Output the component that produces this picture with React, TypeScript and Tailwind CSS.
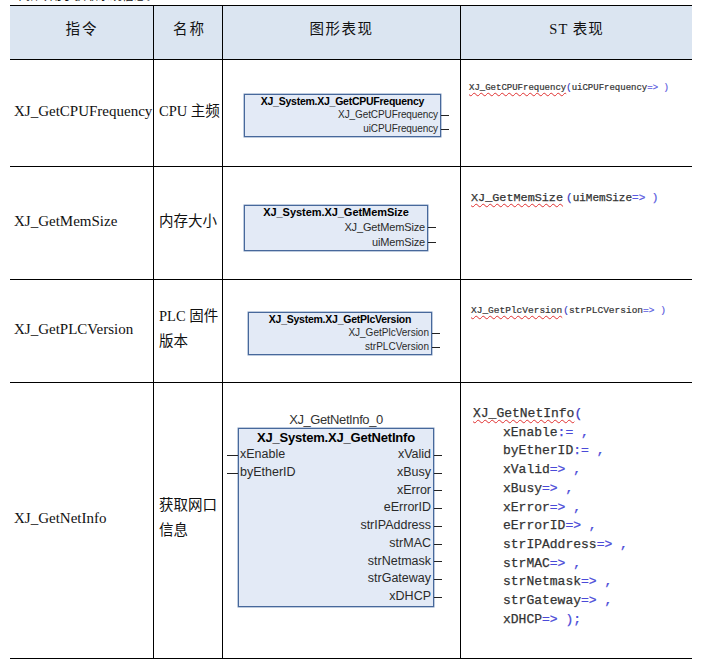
const serif = "font-['Liberation_Serif','Noto_Sans_CJK_SC',serif]";
const sans = "font-['Liberation_Sans',sans-serif]";

type BlockProps = {
  title: string;
  instance?: string;
  inputs?: string[];
  outputs: string[];
  width: string;
  height: string;
  titleSize: string;
  pinSize: string;
  rowHeight: string;
  outer: string;
};

function FbdBlock({ title, instance, inputs = [], outputs, width, height, titleSize, pinSize, rowHeight, outer }: BlockProps) {
  return (
    <div className={`flex flex-col items-center ${sans} ${width} ${outer}`}>
      {instance && <div className="mb-px h-[15px] text-[13px] leading-[15px] tracking-[-0.4px] text-[#333]">{instance}</div>}
      <div className={`w-full ${height} border border-[#47689b] bg-[#e3eaf6] text-[#2a2a2a] shadow-[0_0_0_0.5px_#7f97bd]`}>
        <div className={`text-center font-bold text-black ${titleSize}`}>{title}</div>
        <div className="flex justify-between">
          <div>
            {inputs.map((p) => (
              <div key={p} className={`relative pl-px ${rowHeight} ${pinSize}`}>
                <span className="absolute left-[-12px] top-1/2 h-px w-[11px] bg-[#222]" />
                {p}
              </div>
            ))}
          </div>
          <div className="text-right">
            {outputs.map((p) => (
              <div key={p} className={`relative pr-[2px] ${rowHeight} ${pinSize}`}>
                {p}
                <span className="absolute right-[-9px] top-1/2 h-px w-[8px] bg-[#222]" />
              </div>
            ))}
          </div>
        </div>
      </div>
    </div>
  );
}

function Squiggle({ children }: { children: React.ReactNode }) {
  return <span className="underline decoration-wavy decoration-[#e03030] decoration-1 underline-offset-2">{children}</span>;
}

function Row({ height, name, label, graphic, code }: { height: string; name: string; label: React.ReactNode; graphic: React.ReactNode; code: React.ReactNode }) {
  return (
    <div className={`grid grid-cols-[144px_69px_238px_231px] border-b border-black ${height}`}>
      <div className="flex items-center border-r border-black pb-[4px] pl-[4px] text-[15px] whitespace-nowrap">{name}</div>
      <div className="flex items-center border-r border-black pl-[5px] text-[14.5px] leading-[25px]">{label}</div>
      <div className="flex items-center border-r border-black">{graphic}</div>
      <div>{code}</div>
    </div>
  );
}

const netPins = [
  ["xEnable", ":=", " ,"],
  ["byEtherID", ":=", " ,"],
  ["xValid", "=>", " ,"],
  ["xBusy", "=>", " ,"],
  ["xError", "=>", " ,"],
  ["eErrorID", "=>", " ,"],
  ["strIPAddress", "=>", " ,"],
  ["strMAC", "=>", " ,"],
  ["strNetmask", "=>", " ,"],
  ["strGateway", "=>", " ,"],
  ["xDHCP", "=>", " );"],
];

export default function App() {
  return (
    <div className={`h-[668px] w-[701px] overflow-hidden bg-white text-[#111] ${serif}`}>
      <div className="h-[5px] overflow-hidden">
        <div className="mt-[-11px] ml-[14px] text-[12px] leading-[14px]">本指令用于获取系统信息。</div>
      </div>
      <div className="ml-[10px] w-[682px] border-t border-black">
        <div className="grid h-[54px] grid-cols-[144px_69px_238px_231px] border-b border-black bg-[#dbe5f1] text-[14.5px]">
          <div className="flex items-center justify-center border-r border-black pb-[6px] pl-px tracking-[2px]">指令</div>
          <div className="flex items-center justify-center border-r border-black pb-[6px] pl-[3px] tracking-[2px]">名称</div>
          <div className="flex items-center justify-center border-r border-black pb-[6px] tracking-[1.5px]">图形表现</div>
          <div className="flex items-center justify-center pb-[6px] tracking-[1px]">ST 表现</div>
        </div>

        <Row
          height="h-[107px]"
          name="XJ_GetCPUFrequency"
          label={<span className="pb-[4px]">CPU 主频</span>}
          graphic={
            <FbdBlock
              title="XJ_System.XJ_GetCPUFrequency"
              outputs={["XJ_GetCPUFrequency", "uiCPUFrequency"]}
              width="w-[197px]"
              height="h-[43px]"
              titleSize="text-[10.5px] leading-[13px] tracking-[-0.25px]"
              pinSize="text-[10px] tracking-[-0.1px]"
              rowHeight="h-[14px] leading-[14px]"
              outer="ml-[21px] mt-[5px]"
            />
          }
          code={
            <div className="pt-[22px] pl-[8px] font-['Liberation_Mono',monospace] text-[9px] leading-[12px] whitespace-nowrap text-[#333] [-webkit-text-stroke:0.2px]">
              <Squiggle>XJ_GetCPUFrequency</Squiggle>
              <span className="text-[#3a3ac0]">(</span>uiCPUFrequency<span className="text-[#5a5ae0]">=&gt; )</span>
            </div>
          }
        />
        <Row
          height="h-[113px]"
          name="XJ_GetMemSize"
          label={<span className="pb-[4px]">内存大小</span>}
          graphic={
            <FbdBlock
              title="XJ_System.XJ_GetMemSize"
              outputs={["XJ_GetMemSize", "uiMemSize"]}
              width="w-[184px]"
              height="h-[46px]"
              titleSize="text-[11px] leading-[13.5px] tracking-[-0.05px]"
              pinSize="text-[11px] tracking-[-0.15px]"
              rowHeight="h-[15px] leading-[15px]"
              outer="ml-[21px] mt-[10px]"
            />
          }
          code={
            <div className="pt-[24px] pl-[10px] font-['Liberation_Mono',monospace] text-[11.8px] leading-[14px] whitespace-nowrap text-[#333] [-webkit-text-stroke:0.25px]">
              <Squiggle>XJ_GetMemSize</Squiggle>
              <span className="ml-[3px] text-[11px]">
                <span className="text-[#3a3ac0]">(</span>uiMemSize<span className="text-[#5a5ae0]">=&gt; )</span>
              </span>
            </div>
          }
        />
        <Row
          height="h-[103px]"
          name="XJ_GetPLCVersion"
          label={
            <span className="pb-[5px]">
              PLC 固件
              <br />
              版本
            </span>
          }
          graphic={
            <FbdBlock
              title="XJ_System.XJ_GetPlcVersion"
              outputs={["XJ_GetPlcVersion", "strPLCVersion"]}
              width="w-[184px]"
              height="h-[43px]"
              titleSize="text-[10.5px] leading-[12.5px] tracking-[-0.25px]"
              pinSize="text-[10px]"
              rowHeight="h-[14px] leading-[14px]"
              outer="ml-[25px] mt-[5px]"
            />
          }
          code={
            <div className="pt-[24px] pl-[10px] font-['Liberation_Mono',monospace] text-[9.5px] leading-[14px] whitespace-nowrap text-[#333] [-webkit-text-stroke:0.2px]">
              <Squiggle>XJ_GetPlcVersion</Squiggle>
              <span className="ml-px">
                <span className="text-[#3a3ac0]">(</span>strPLCVersion<span className="text-[#5a5ae0]">=&gt; )</span>
              </span>
            </div>
          }
        />
        <Row
          height="h-[276px]"
          name="XJ_GetNetInfo"
          label={
            <span className="pb-[6px]">
              获取网口
              <br />
              信息
            </span>
          }
          graphic={
            <FbdBlock
              title="XJ_System.XJ_GetNetInfo"
              instance="XJ_GetNetInfo_0"
              inputs={["xEnable", "byEtherID"]}
              outputs={["xValid", "xBusy", "xError", "eErrorID", "strIPAddress", "strMAC", "strNetmask", "strGateway", "xDHCP"]}
              width="w-[196px]"
              height="h-[179px]"
              titleSize="text-[13px] leading-[17px] tracking-[-0.2px]"
              pinSize="text-[12.5px]"
              rowHeight="h-[17.75px] leading-[17.75px]"
              outer="ml-[15px] mb-[22px]"
            />
          }
          code={
            <div className="pt-[22px] pl-[12px] font-['Liberation_Mono',monospace] text-[13px] leading-[18.7px] whitespace-pre text-[#333] [-webkit-text-stroke:0.25px]">
              <Squiggle>XJ_GetNetInfo</Squiggle>
              <span className="text-[#3a3ac0]">(</span>
              {netPins.map(([n, op, end]) => (
                <div key={n} className="pl-[30px]">
                  {n}
                  <span className="text-[#4a4ad8]">
                    {op}
                    {end}
                  </span>
                </div>
              ))}
            </div>
          }
        />
      </div>
    </div>
  );
}
